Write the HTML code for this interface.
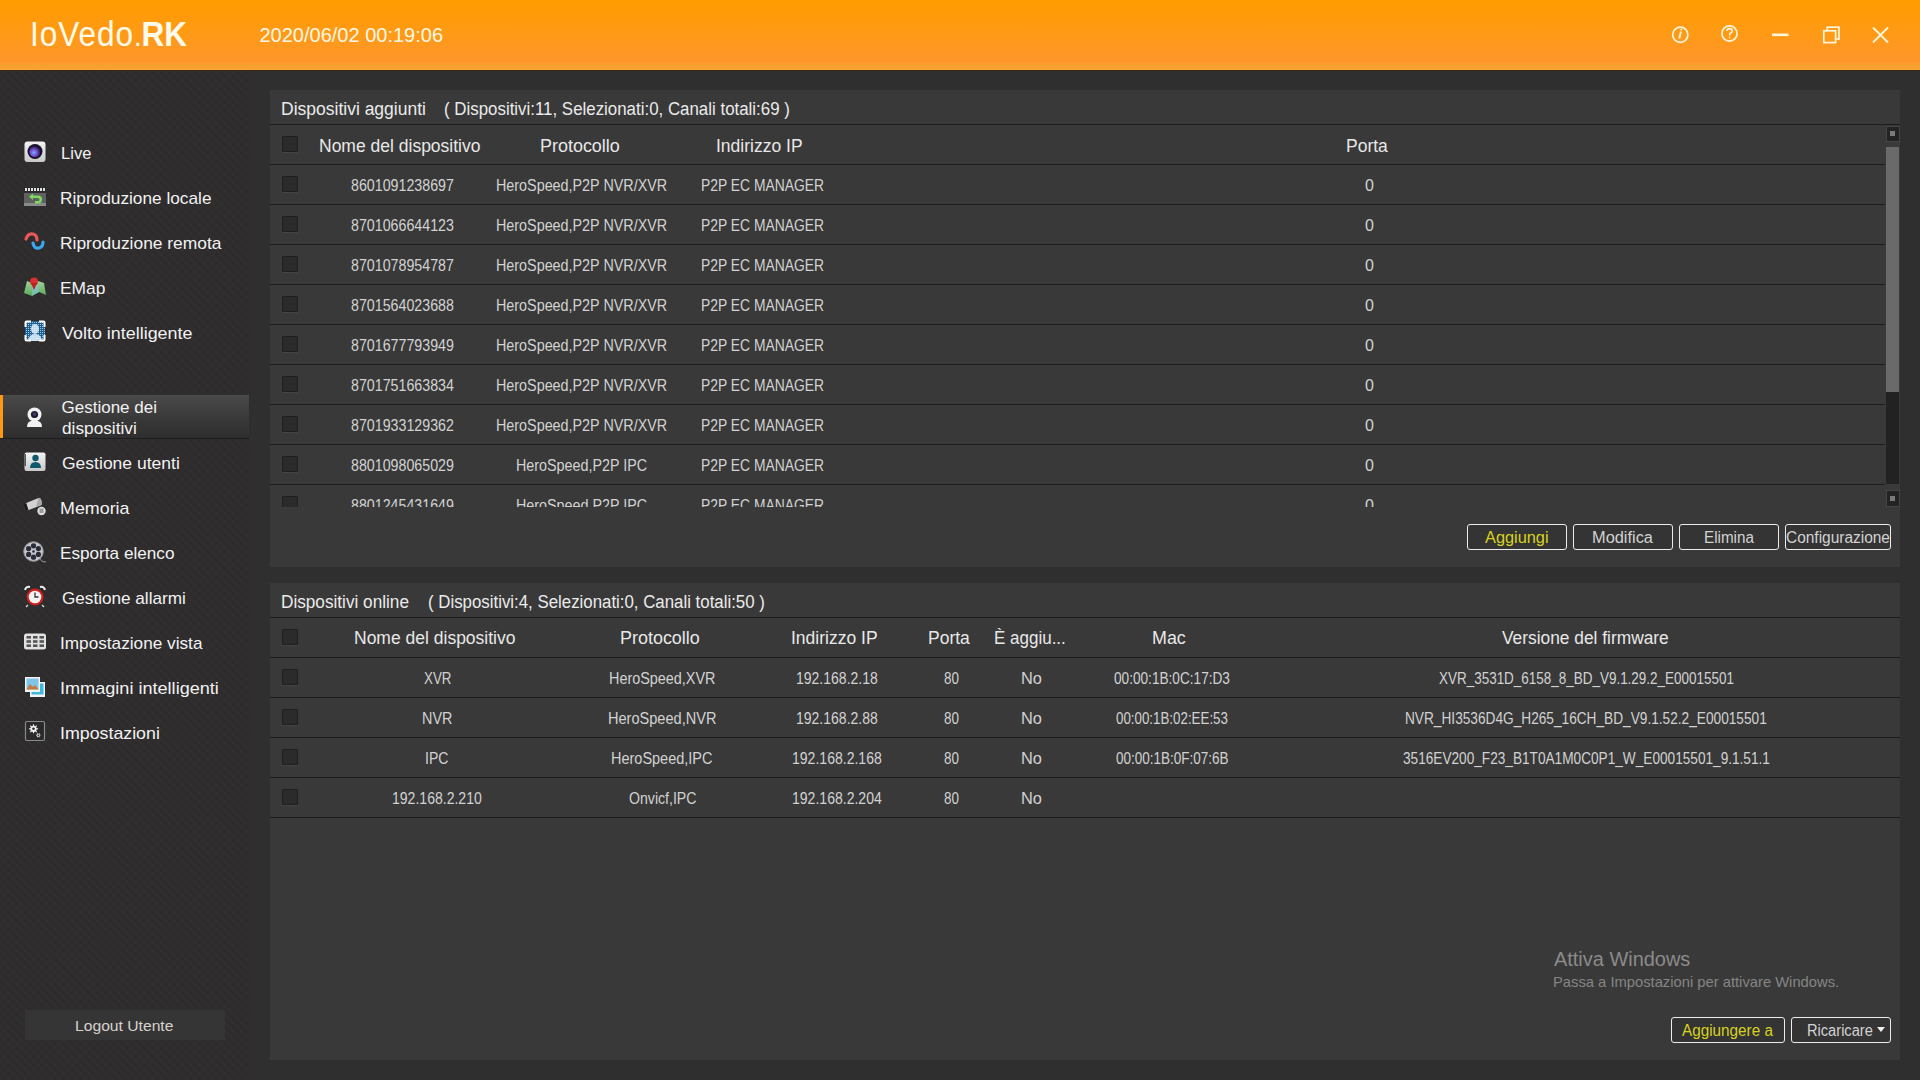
<!DOCTYPE html>
<html><head><meta charset="utf-8"><style>
*{margin:0;padding:0;box-sizing:border-box}
html,body{width:1920px;height:1080px;overflow:hidden;background:#2f2f2f;font-family:"Liberation Sans",sans-serif}
.tx{position:absolute;white-space:pre;line-height:1}
#hdr{position:absolute;left:0;top:0;width:1920px;height:70px;background:linear-gradient(#ff9c00,#ff9a14 45%,#ff962c 88%,#f7a02c 93%,#f9a535)}
#hdrline{position:absolute;left:0;top:70px;width:1920px;height:1px;background:#3a2814}
#side{position:absolute;left:0;top:71px;width:250px;height:1009px;background:repeating-linear-gradient(45deg,rgba(255,255,255,0.012) 0 3px,rgba(0,0,0,0) 3px 6px),repeating-linear-gradient(-45deg,rgba(0,0,0,0.02) 0 3px,rgba(0,0,0,0) 3px 6px),#2e2c2d}
#main{position:absolute;left:250px;top:71px;width:1670px;height:1009px;background:#2f2f2f}
.panel{position:absolute;left:270px;width:1630px;background:#393939}
.hl{position:absolute;height:1px;background:#1c1c1c}
.cb{position:absolute;left:282px;width:16px;height:16px;background:#2b2b2b;border:1px solid #1f1f1f;border-radius:1px;box-shadow:0 1px 0 #444}
.ico{position:absolute}
.btn{position:absolute;height:26px;border:1.5px solid #ececec;border-radius:3px;background:#343434}
</style></head><body>
<div id="hdr"></div><div id="hdrline"></div>
<div class="tx" style="left:30px;top:15.5px;font-size:35px;color:#fffbea;transform:scaleX(0.9);transform-origin:0 0"><span style="letter-spacing:1.1px">IoVedo</span><b style="font-weight:normal;font-size:30px">.</b><b>RK</b></div>
<div id="side"></div><div id="main"></div>
<div class="panel" style="top:90px;height:477px"></div>
<div class="panel" style="top:583px;height:477px"></div>
<div class="hl" style="left:270px;top:124px;width:1630px"></div>
<div class="cb" style="top:136px"></div>
<div class="hl" style="left:270px;top:164px;width:1615px"></div>
<div style="position:absolute;left:0;top:0;width:1920px;height:507px;overflow:hidden">
<div class="cb" style="top:176px"></div>
<div class="hl" style="left:270px;top:204px;width:1615px"></div>
<div class="cb" style="top:216px"></div>
<div class="hl" style="left:270px;top:244px;width:1615px"></div>
<div class="cb" style="top:256px"></div>
<div class="hl" style="left:270px;top:284px;width:1615px"></div>
<div class="cb" style="top:296px"></div>
<div class="hl" style="left:270px;top:324px;width:1615px"></div>
<div class="cb" style="top:336px"></div>
<div class="hl" style="left:270px;top:364px;width:1615px"></div>
<div class="cb" style="top:376px"></div>
<div class="hl" style="left:270px;top:404px;width:1615px"></div>
<div class="cb" style="top:416px"></div>
<div class="hl" style="left:270px;top:444px;width:1615px"></div>
<div class="cb" style="top:456px"></div>
<div class="hl" style="left:270px;top:484px;width:1615px"></div>
<div class="cb" style="top:496px"></div>
<div class="hl" style="left:270px;top:524px;width:1615px"></div>
<div class="tx" style="left:350.50px;top:178.44px;font-size:16px;color:#d2d2d2;transform:scaleX(0.8896);transform-origin:0 0;">8601091238697</div>
<div class="tx" style="left:496.10px;top:178.44px;font-size:16px;color:#d2d2d2;transform:scaleX(0.8964);transform-origin:0 0;">HeroSpeed,P2P NVR/XVR</div>
<div class="tx" style="left:700.63px;top:178.44px;font-size:16px;color:#d2d2d2;transform:scaleX(0.8671);transform-origin:0 0;">P2P EC MANAGER</div>
<div class="tx" style="left:1365.00px;top:178.44px;font-size:16px;color:#d2d2d2;">0</div>
<div class="tx" style="left:350.50px;top:218.44px;font-size:16px;color:#d2d2d2;transform:scaleX(0.8896);transform-origin:0 0;">8701066644123</div>
<div class="tx" style="left:496.10px;top:218.44px;font-size:16px;color:#d2d2d2;transform:scaleX(0.8964);transform-origin:0 0;">HeroSpeed,P2P NVR/XVR</div>
<div class="tx" style="left:700.63px;top:218.44px;font-size:16px;color:#d2d2d2;transform:scaleX(0.8671);transform-origin:0 0;">P2P EC MANAGER</div>
<div class="tx" style="left:1365.00px;top:218.44px;font-size:16px;color:#d2d2d2;">0</div>
<div class="tx" style="left:350.50px;top:258.44px;font-size:16px;color:#d2d2d2;transform:scaleX(0.8896);transform-origin:0 0;">8701078954787</div>
<div class="tx" style="left:496.10px;top:258.44px;font-size:16px;color:#d2d2d2;transform:scaleX(0.8964);transform-origin:0 0;">HeroSpeed,P2P NVR/XVR</div>
<div class="tx" style="left:700.63px;top:258.44px;font-size:16px;color:#d2d2d2;transform:scaleX(0.8671);transform-origin:0 0;">P2P EC MANAGER</div>
<div class="tx" style="left:1365.00px;top:258.44px;font-size:16px;color:#d2d2d2;">0</div>
<div class="tx" style="left:350.50px;top:298.44px;font-size:16px;color:#d2d2d2;transform:scaleX(0.8896);transform-origin:0 0;">8701564023688</div>
<div class="tx" style="left:496.10px;top:298.44px;font-size:16px;color:#d2d2d2;transform:scaleX(0.8964);transform-origin:0 0;">HeroSpeed,P2P NVR/XVR</div>
<div class="tx" style="left:700.63px;top:298.44px;font-size:16px;color:#d2d2d2;transform:scaleX(0.8671);transform-origin:0 0;">P2P EC MANAGER</div>
<div class="tx" style="left:1365.00px;top:298.44px;font-size:16px;color:#d2d2d2;">0</div>
<div class="tx" style="left:350.50px;top:338.44px;font-size:16px;color:#d2d2d2;transform:scaleX(0.8896);transform-origin:0 0;">8701677793949</div>
<div class="tx" style="left:496.10px;top:338.44px;font-size:16px;color:#d2d2d2;transform:scaleX(0.8964);transform-origin:0 0;">HeroSpeed,P2P NVR/XVR</div>
<div class="tx" style="left:700.63px;top:338.44px;font-size:16px;color:#d2d2d2;transform:scaleX(0.8671);transform-origin:0 0;">P2P EC MANAGER</div>
<div class="tx" style="left:1365.00px;top:338.44px;font-size:16px;color:#d2d2d2;">0</div>
<div class="tx" style="left:350.50px;top:378.44px;font-size:16px;color:#d2d2d2;transform:scaleX(0.8896);transform-origin:0 0;">8701751663834</div>
<div class="tx" style="left:496.10px;top:378.44px;font-size:16px;color:#d2d2d2;transform:scaleX(0.8964);transform-origin:0 0;">HeroSpeed,P2P NVR/XVR</div>
<div class="tx" style="left:700.63px;top:378.44px;font-size:16px;color:#d2d2d2;transform:scaleX(0.8671);transform-origin:0 0;">P2P EC MANAGER</div>
<div class="tx" style="left:1365.00px;top:378.44px;font-size:16px;color:#d2d2d2;">0</div>
<div class="tx" style="left:350.50px;top:418.44px;font-size:16px;color:#d2d2d2;transform:scaleX(0.8896);transform-origin:0 0;">8701933129362</div>
<div class="tx" style="left:496.10px;top:418.44px;font-size:16px;color:#d2d2d2;transform:scaleX(0.8964);transform-origin:0 0;">HeroSpeed,P2P NVR/XVR</div>
<div class="tx" style="left:700.63px;top:418.44px;font-size:16px;color:#d2d2d2;transform:scaleX(0.8671);transform-origin:0 0;">P2P EC MANAGER</div>
<div class="tx" style="left:1365.00px;top:418.44px;font-size:16px;color:#d2d2d2;">0</div>
<div class="tx" style="left:350.50px;top:458.44px;font-size:16px;color:#d2d2d2;transform:scaleX(0.8896);transform-origin:0 0;">8801098065029</div>
<div class="tx" style="left:516.10px;top:458.44px;font-size:16px;color:#d2d2d2;transform:scaleX(0.8953);transform-origin:0 0;">HeroSpeed,P2P IPC</div>
<div class="tx" style="left:700.63px;top:458.44px;font-size:16px;color:#d2d2d2;transform:scaleX(0.8671);transform-origin:0 0;">P2P EC MANAGER</div>
<div class="tx" style="left:1365.00px;top:458.44px;font-size:16px;color:#d2d2d2;">0</div>
<div class="tx" style="left:350.50px;top:498.44px;font-size:16px;color:#d2d2d2;transform:scaleX(0.8896);transform-origin:0 0;">8801245431649</div>
<div class="tx" style="left:516.10px;top:498.44px;font-size:16px;color:#d2d2d2;transform:scaleX(0.8953);transform-origin:0 0;">HeroSpeed,P2P IPC</div>
<div class="tx" style="left:700.63px;top:498.44px;font-size:16px;color:#d2d2d2;transform:scaleX(0.8671);transform-origin:0 0;">P2P EC MANAGER</div>
<div class="tx" style="left:1365.00px;top:498.44px;font-size:16px;color:#d2d2d2;">0</div>
</div>
<div style="position:absolute;left:1886px;top:126px;width:14px;height:16px;background:#232323;border:1px solid #454545"></div>
<div style="position:absolute;left:1890px;top:131px;width:5px;height:5px;background:#7a7a7a"></div>
<div style="position:absolute;left:1886px;top:147px;width:13px;height:245px;background:#6a6a6a"></div>
<div style="position:absolute;left:1886px;top:392px;width:13px;height:92px;background:#222"></div>
<div style="position:absolute;left:1886px;top:490px;width:14px;height:17px;background:#232323;border:1px solid #454545"></div>
<div style="position:absolute;left:1890px;top:496px;width:5px;height:5px;background:#7a7a7a"></div>
<div class="btn" style="left:1467px;top:524px;width:100px"></div>
<div class="btn" style="left:1573px;top:524px;width:100px"></div>
<div class="btn" style="left:1679px;top:524px;width:100px"></div>
<div class="btn" style="left:1785px;top:524px;width:106px"></div>
<div class="hl" style="left:270px;top:617px;width:1630px"></div>
<div class="cb" style="top:629px"></div>
<div class="hl" style="left:270px;top:657px;width:1630px"></div>
<div class="cb" style="top:669px"></div>
<div class="hl" style="left:270px;top:697px;width:1630px"></div>
<div class="cb" style="top:709px"></div>
<div class="hl" style="left:270px;top:737px;width:1630px"></div>
<div class="cb" style="top:749px"></div>
<div class="hl" style="left:270px;top:777px;width:1630px"></div>
<div class="cb" style="top:789px"></div>
<div class="hl" style="left:270px;top:817px;width:1630px"></div>
<div class="btn" style="left:1671px;top:1017px;width:114px"></div>
<div class="btn" style="left:1791px;top:1017px;width:100px"></div>
<div style="position:absolute;left:1877px;top:1027px;width:0;height:0;border-left:4px solid transparent;border-right:4px solid transparent;border-top:5px solid #f0f0f0"></div>
<div style="position:absolute;left:0;top:395px;width:249px;height:43px;background:linear-gradient(#4a4a4a,#3a3a3a 50%,#2e2e2e);box-shadow:0 1px 0 #1e1e1e"></div>
<div style="position:absolute;left:0;top:395px;width:3px;height:43px;background:#ff9a10"></div>
<div style="position:absolute;left:25px;top:1010px;width:200px;height:30px;background:#363535"></div>
<svg style="position:absolute;left:0;top:0" width="260" height="760" viewBox="0 0 260 760">
 <defs>
  <linearGradient id="gw" x1="0" y1="0" x2="0" y2="1"><stop offset="0" stop-color="#f4f4f4"/><stop offset="1" stop-color="#c8c8c8"/></linearGradient>
  <radialGradient id="glens" cx="0.4" cy="0.6" r="0.6"><stop offset="0" stop-color="#6ab0ff"/><stop offset="0.45" stop-color="#7b4fd8"/><stop offset="1" stop-color="#161030"/></radialGradient>
  <linearGradient id="gmap" x1="0" y1="0" x2="0" y2="1"><stop offset="0" stop-color="#9fd49a"/><stop offset="1" stop-color="#5aa85a"/></linearGradient>
  <pattern id="pgrid" width="2" height="2" patternUnits="userSpaceOnUse"><rect width="2" height="2" fill="#1f5f8f"/><rect width="1" height="1" fill="#9cc8e8"/></pattern>
 </defs>
 <!-- Live -->
 <rect x="24.5" y="141.5" width="21" height="20.5" rx="3" fill="url(#gw)"/>
 <circle cx="35" cy="151.5" r="7.5" fill="#15122a"/>
 <circle cx="35" cy="151.5" r="5.8" fill="url(#glens)"/>
 <!-- Riproduzione locale -->
 <rect x="24" y="187" width="22" height="5" fill="#2a2a2a"/>
 <g fill="#e0e0e0"><rect x="25" y="188" width="2" height="3"/><rect x="28" y="188" width="2" height="3"/><rect x="31" y="188" width="2" height="3"/><rect x="34" y="188" width="2" height="3"/><rect x="37" y="188" width="2" height="3"/><rect x="40" y="188" width="2" height="3"/><rect x="43" y="188" width="2" height="3"/></g>
 <rect x="24" y="193" width="22" height="13" fill="#5f625f"/>
 <rect x="24" y="203" width="22" height="3" fill="#8a8a8a"/>
 <path d="M29 196.5 L33 193.5 L33 195.5 L38 195.5 Q42 195.5 42 199.5 Q42 203.5 38 203.5 L35 203.5 L35 201 L38 201 Q39.5 201 39.5 199.5 Q39.5 198 38 198 L33 198 L33 200 Z" fill="#7ed860"/>
 <!-- Riproduzione remota -->
 <path d="M26 239 Q28 233 33 234 Q37 235 37 240" fill="none" stroke="#e85a5a" stroke-width="3.2" stroke-linecap="round"/>
 <path d="M33 243 Q34 249 39 248 Q43 247 43 242" fill="none" stroke="#3aa8f0" stroke-width="3.2" stroke-linecap="round"/>
 <!-- EMap -->
 <path d="M24 293 L27 281 L32 283 L38 281 L44 283 L46 295 L39 292 L32 296 Z" fill="url(#gmap)"/>
 <path d="M32 283 L38 281 L39 292 L32 296 Z" fill="#88c8e8" opacity="0.55"/>
 <circle cx="34" cy="281.5" r="4" fill="#d83030"/>
 <path d="M31 283 L34 290 L37 283 Z" fill="#c02020"/>
 <!-- Volto -->
 <rect x="25" y="321" width="20" height="20" rx="2" fill="url(#pgrid)"/>
 <ellipse cx="35" cy="329" rx="4" ry="5" fill="#d8ecf8" opacity="0.9"/>
 <path d="M28 341 Q29 334 35 334 Q41 334 42 341 Z" fill="#d8ecf8" opacity="0.9"/>
 <path d="M25.5 327 L25.5 322.5 Q25.5 321.5 26.5 321.5 L31 321.5 M39 321.5 L43.5 321.5 Q44.5 321.5 44.5 322.5 L44.5 327 M44.5 335 L44.5 339.5 Q44.5 340.5 43.5 340.5 L39 340.5 M31 340.5 L26.5 340.5 Q25.5 340.5 25.5 339.5 L25.5 335" fill="none" stroke="#ffffff" stroke-width="2"/>
 <!-- Gestione dispositivi (webcam) -->
 <circle cx="34.5" cy="414.5" r="7" fill="#f2f2f2"/>
 <circle cx="34.5" cy="414.5" r="3.6" fill="#1c1830"/>
 <circle cx="34.5" cy="414" r="2" fill="#3c3a60"/>
 <path d="M27 427 Q27 422 31 421 L38 421 Q42 422 42 427 Z" fill="#f2f2f2"/>
 <!-- Gestione utenti -->
 <rect x="24.5" y="452.5" width="21" height="18.5" rx="2" fill="url(#gw)"/>
 <rect x="24.5" y="454" width="1.5" height="12" fill="#555"/>
 <circle cx="35.5" cy="458" r="3.2" fill="#0e5a6a"/>
 <path d="M30 468 Q30 462 35.5 462 Q41 462 41 468 Z" fill="#0e5a6a"/>
 <!-- Memoria (cctv) -->
 <path d="M25 503.5 L38.5 498 Q40.5 497.5 41 499.5 L42 503 Q42.3 504.8 40.5 505.5 L27.5 510.5 Z" fill="#d2d2d2"/>
 <path d="M38.5 498 Q40.5 497.5 41 499.5 L42 503 Q42.3 504.8 40.5 505.5 L36 507 Z" fill="#a8a8a8"/>
 <path d="M24 503.8 L26.2 503 L28.5 510 L26.3 510.8 Z" fill="#1a1a1a"/>
 <circle cx="41.5" cy="511" r="4.2" fill="#e0e0e0"/>
 <path d="M39.5 508.5 L43.5 508.5 L43.5 513 L39.5 513 Z" fill="#9a9a9a"/>
 <!-- Esporta (reel) -->
 <circle cx="33.5" cy="551.5" r="9.8" fill="#c4c6cc"/>
 <circle cx="33.5" cy="551.5" r="9.8" fill="none" stroke="#8a8c92" stroke-width="1"/>
 <g fill="#2a2c36"><circle cx="33.5" cy="545.8" r="2.6"/><circle cx="38.4" cy="548.6" r="2.6"/><circle cx="38.4" cy="554.4" r="2.6"/><circle cx="33.5" cy="557.2" r="2.6"/><circle cx="28.6" cy="554.4" r="2.6"/><circle cx="28.6" cy="548.6" r="2.6"/></g>
 <circle cx="33.5" cy="551.5" r="1.3" fill="#2a2c36"/>
 <path d="M40 559 Q43 563 46 561.5" stroke="#8a8a8a" stroke-width="1.1" fill="none"/>
 <!-- Allarmi -->
 <path d="M25 590 Q26 586 30 587 M45 590 Q44 586 40 587" stroke="#eee" stroke-width="2" fill="none"/>
 <circle cx="35" cy="597" r="8.5" fill="#d02020"/>
 <circle cx="35" cy="597" r="6.3" fill="#f2f2f2"/>
 <path d="M35 592.5 L35 597 L38.5 597" stroke="#333" stroke-width="1.3" fill="none"/>
 <path d="M28 605 L26 607 M42 605 L44 607" stroke="#ddd" stroke-width="1.3"/>
 <!-- Vista -->
 <rect x="24" y="633.5" width="22" height="16" rx="2.5" fill="#e2e2e2"/>
 <g fill="#555"><rect x="26.5" y="636" width="4.5" height="2.6"/><rect x="33" y="636" width="4.5" height="2.6"/><rect x="39.5" y="636" width="4.5" height="2.6"/>
 <rect x="26.5" y="640.2" width="4.5" height="2.6"/><rect x="33" y="640.2" width="4.5" height="2.6"/><rect x="39.5" y="640.2" width="4.5" height="2.6"/>
 <rect x="26.5" y="644.4" width="4.5" height="2.6"/><rect x="33" y="644.4" width="4.5" height="2.6"/><rect x="39.5" y="644.4" width="4.5" height="2.6"/></g>
 <!-- Immagini -->
 <rect x="30" y="682" width="15" height="15" fill="#f4f4f4"/>
 <rect x="31.5" y="683.5" width="12" height="11" fill="#40b8d8"/>
 <rect x="25" y="677" width="15" height="15" fill="#f4f4f4"/>
 <rect x="26.5" y="678.5" width="12" height="11" fill="#7cc4e8"/>
 <path d="M26.5 689.5 L30 684 L33 687 L35 685 L38.5 689.5 Z" fill="#c87a3a"/>
 <!-- Impostazioni -->
 <rect x="25.5" y="721.5" width="19" height="19" rx="1.5" fill="#2a2a2a" stroke="#8a8a8a" stroke-width="1.2"/>
 <path d="M36.64 728.18 L38.07 728.26 L38.07 729.34 L36.64 729.42 L36.16 730.58 L37.11 731.65 L36.35 732.41 L35.28 731.46 L34.12 731.94 L34.04 733.37 L32.96 733.37 L32.88 731.94 L31.72 731.46 L30.65 732.41 L29.89 731.65 L30.84 730.58 L30.36 729.42 L28.93 729.34 L28.93 728.26 L30.36 728.18 L30.84 727.02 L29.89 725.95 L30.65 725.19 L31.72 726.14 L32.88 725.66 L32.96 724.23 L34.04 724.23 L34.12 725.66 L35.28 726.14 L36.35 725.19 L37.11 725.95 L36.16 727.02 Z" fill="#f0f0f0"/>
 <circle cx="33.5" cy="728.8" r="1.3" fill="#2a2a2a"/>
 <path d="M39.85 734.79 L40.67 734.82 L40.67 735.58 L39.85 735.61 L39.43 736.33 L39.81 737.07 L39.16 737.44 L38.71 736.75 L37.89 736.75 L37.44 737.44 L36.79 737.07 L37.17 736.33 L36.75 735.61 L35.93 735.58 L35.93 734.82 L36.75 734.79 L37.17 734.07 L36.79 733.33 L37.44 732.96 L37.89 733.65 L38.71 733.65 L39.16 732.96 L39.81 733.33 L39.43 734.07 Z" fill="#d8d8d8"/>
 <circle cx="38.3" cy="735.2" r="0.8" fill="#2a2a2a"/>
</svg>
<svg style="position:absolute;left:1660px;top:15px" width="240" height="40" viewBox="1660 15 240 40">
 <g fill="none" stroke="#fff6dc" stroke-width="1.7">
  <circle cx="1680.3" cy="34.8" r="7.6"/>
  <circle cx="1729.5" cy="33.5" r="7.6"/>
  <rect x="1827.2" y="27.2" width="11.8" height="11.8"/>
 </g>
 <path d="M1680.9 31.5 L1679.3 38.5" stroke="#fff6dc" stroke-width="1.9"/>
 <circle cx="1681.2" cy="29.5" r="0.9" fill="#fff6dc"/>
 <path d="M1727 31 Q1727 28.6 1729.6 28.6 Q1732.2 28.6 1732.2 31 Q1732.2 32.6 1729.8 33.6 L1729.6 35.5" stroke="#fff6dc" stroke-width="1.6" fill="none"/>
 <circle cx="1729.6" cy="37.6" r="0.8" fill="#fff6dc"/>
 <rect x="1772" y="33.5" width="16.5" height="2.6" fill="#fff6dc"/>
 <rect x="1823.8" y="30.8" width="11.8" height="11.8" fill="#fd9a18" stroke="#fff6dc" stroke-width="1.7"/>
 <path d="M1873 27.5 L1888 42.5 M1888 27.5 L1873 42.5" stroke="#fff6dc" stroke-width="1.8"/>
</svg>

<div class="tx" style="left:259.50px;top:25.30px;font-size:20px;color:#fff8e6;">2020/06/02 00:19:06</div>
<div class="tx" style="left:281.03px;top:99.62px;font-size:18px;color:#ebebeb;transform:scaleX(0.9723);transform-origin:0 0;">Dispositivi aggiunti</div>
<div class="tx" style="left:444.06px;top:99.62px;font-size:18px;color:#ebebeb;transform:scaleX(0.9377);transform-origin:0 0;">( Dispositivi:11, Selezionati:0, Canali totali:69 )</div>
<div class="tx" style="left:319.00px;top:137.70px;font-size:17.5px;color:#e8e8e8;">Nome del dispositivo</div>
<div class="tx" style="left:539.97px;top:137.70px;font-size:17.5px;color:#e8e8e8;transform:scaleX(1.0252);transform-origin:0 0;">Protocollo</div>
<div class="tx" style="left:716.00px;top:137.70px;font-size:17.5px;color:#e8e8e8;">Indirizzo IP</div>
<div class="tx" style="left:1346.00px;top:137.70px;font-size:17.5px;color:#e8e8e8;">Porta</div>
<div class="tx" style="left:281.05px;top:592.62px;font-size:18px;color:#ebebeb;transform:scaleX(0.9545);transform-origin:0 0;">Dispositivi online</div>
<div class="tx" style="left:428.06px;top:592.62px;font-size:18px;color:#ebebeb;transform:scaleX(0.9353);transform-origin:0 0;">( Dispositivi:4, Selezionati:0, Canali totali:50 )</div>
<div class="tx" style="left:354.00px;top:630.20px;font-size:17.5px;color:#e8e8e8;">Nome del dispositivo</div>
<div class="tx" style="left:619.97px;top:630.20px;font-size:17.5px;color:#e8e8e8;transform:scaleX(1.0252);transform-origin:0 0;">Protocollo</div>
<div class="tx" style="left:791.00px;top:630.20px;font-size:17.5px;color:#e8e8e8;">Indirizzo IP</div>
<div class="tx" style="left:928.00px;top:630.20px;font-size:17.5px;color:#e8e8e8;">Porta</div>
<div class="tx" style="left:994.03px;top:630.20px;font-size:17.5px;color:#e8e8e8;transform:scaleX(0.9712);transform-origin:0 0;">È aggiu...</div>
<div class="tx" style="left:1151.98px;top:630.20px;font-size:17.5px;color:#e8e8e8;transform:scaleX(1.0213);transform-origin:0 0;">Mac</div>
<div class="tx" style="left:1502.00px;top:630.20px;font-size:17.5px;color:#e8e8e8;transform:scaleX(0.9908);transform-origin:0 0;">Versione del firmware</div>
<div class="tx" style="left:424.00px;top:671.44px;font-size:16px;color:#d2d2d2;transform:scaleX(0.8348);transform-origin:0 0;">XVR</div>
<div class="tx" style="left:609.10px;top:671.44px;font-size:16px;color:#d2d2d2;transform:scaleX(0.8995);transform-origin:0 0;">HeroSpeed,XVR</div>
<div class="tx" style="left:796.12px;top:671.44px;font-size:16px;color:#d2d2d2;transform:scaleX(0.8755);transform-origin:0 0;">192.168.2.18</div>
<div class="tx" style="left:944.00px;top:671.44px;font-size:16px;color:#d2d2d2;transform:scaleX(0.8381);transform-origin:0 0;">80</div>
<div class="tx" style="left:1020.98px;top:671.44px;font-size:16px;color:#d2d2d2;transform:scaleX(1.0228);transform-origin:0 0;">No</div>
<div class="tx" style="left:1114.00px;top:671.44px;font-size:16px;color:#d2d2d2;transform:scaleX(0.8517);transform-origin:0 0;">00:00:1B:0C:17:D3</div>
<div class="tx" style="left:1439.00px;top:671.44px;font-size:16px;color:#d2d2d2;transform:scaleX(0.8414);transform-origin:0 0;">XVR_3531D_6158_8_BD_V9.1.29.2_E00015501</div>
<div class="tx" style="left:422.10px;top:711.44px;font-size:16px;color:#d2d2d2;transform:scaleX(0.8999);transform-origin:0 0;">NVR</div>
<div class="tx" style="left:608.09px;top:711.44px;font-size:16px;color:#d2d2d2;transform:scaleX(0.9097);transform-origin:0 0;">HeroSpeed,NVR</div>
<div class="tx" style="left:796.12px;top:711.44px;font-size:16px;color:#d2d2d2;transform:scaleX(0.8755);transform-origin:0 0;">192.168.2.88</div>
<div class="tx" style="left:944.00px;top:711.44px;font-size:16px;color:#d2d2d2;transform:scaleX(0.8381);transform-origin:0 0;">80</div>
<div class="tx" style="left:1020.98px;top:711.44px;font-size:16px;color:#d2d2d2;transform:scaleX(1.0228);transform-origin:0 0;">No</div>
<div class="tx" style="left:1116.00px;top:711.44px;font-size:16px;color:#d2d2d2;transform:scaleX(0.8331);transform-origin:0 0;">00:00:1B:02:EE:53</div>
<div class="tx" style="left:1405.15px;top:711.44px;font-size:16px;color:#d2d2d2;transform:scaleX(0.8544);transform-origin:0 0;">NVR_HI3536D4G_H265_16CH_BD_V9.1.52.2_E00015501</div>
<div class="tx" style="left:425.12px;top:751.44px;font-size:16px;color:#d2d2d2;transform:scaleX(0.8759);transform-origin:0 0;">IPC</div>
<div class="tx" style="left:611.10px;top:751.44px;font-size:16px;color:#d2d2d2;transform:scaleX(0.9049);transform-origin:0 0;">HeroSpeed,IPC</div>
<div class="tx" style="left:792.12px;top:751.44px;font-size:16px;color:#d2d2d2;transform:scaleX(0.8775);transform-origin:0 0;">192.168.2.168</div>
<div class="tx" style="left:944.00px;top:751.44px;font-size:16px;color:#d2d2d2;transform:scaleX(0.8381);transform-origin:0 0;">80</div>
<div class="tx" style="left:1020.98px;top:751.44px;font-size:16px;color:#d2d2d2;transform:scaleX(1.0228);transform-origin:0 0;">No</div>
<div class="tx" style="left:1116.00px;top:751.44px;font-size:16px;color:#d2d2d2;transform:scaleX(0.8436);transform-origin:0 0;">00:00:1B:0F:07:6B</div>
<div class="tx" style="left:1403.00px;top:751.44px;font-size:16px;color:#d2d2d2;transform:scaleX(0.8522);transform-origin:0 0;">3516EV200_F23_B1T0A1M0C0P1_W_E00015501_9.1.51.1</div>
<div class="tx" style="left:392.12px;top:791.44px;font-size:16px;color:#d2d2d2;transform:scaleX(0.8775);transform-origin:0 0;">192.168.2.210</div>
<div class="tx" style="left:629.00px;top:791.44px;font-size:16px;color:#d2d2d2;transform:scaleX(0.8827);transform-origin:0 0;">Onvicf,IPC</div>
<div class="tx" style="left:792.12px;top:791.44px;font-size:16px;color:#d2d2d2;transform:scaleX(0.8775);transform-origin:0 0;">192.168.2.204</div>
<div class="tx" style="left:944.00px;top:791.44px;font-size:16px;color:#d2d2d2;transform:scaleX(0.8381);transform-origin:0 0;">80</div>
<div class="tx" style="left:1020.98px;top:791.44px;font-size:16px;color:#d2d2d2;transform:scaleX(1.0228);transform-origin:0 0;">No</div>
<div class="tx" style="left:60.52px;top:144.78px;font-size:17px;color:#f2f2f2;transform:scaleX(0.9754);transform-origin:0 0;">Live</div>
<div class="tx" style="left:60.49px;top:189.78px;font-size:17px;color:#f2f2f2;transform:scaleX(1.0145);transform-origin:0 0;">Riproduzione locale</div>
<div class="tx" style="left:60.48px;top:234.78px;font-size:17px;color:#f2f2f2;transform:scaleX(1.0232);transform-origin:0 0;">Riproduzione remota</div>
<div class="tx" style="left:60.48px;top:279.78px;font-size:17px;color:#f2f2f2;transform:scaleX(1.0243);transform-origin:0 0;">EMap</div>
<div class="tx" style="left:61.50px;top:324.78px;font-size:17px;color:#f2f2f2;transform:scaleX(1.0538);transform-origin:0 0;">Volto intelligente</div>
<div class="tx" style="left:61.50px;top:398.78px;font-size:17px;color:#f2f2f2;">Gestione dei</div>
<div class="tx" style="left:61.50px;top:419.78px;font-size:17px;color:#f2f2f2;transform:scaleX(1.0148);transform-origin:0 0;">dispositivi</div>
<div class="tx" style="left:61.50px;top:454.78px;font-size:17px;color:#f2f2f2;transform:scaleX(1.0302);transform-origin:0 0;">Gestione utenti</div>
<div class="tx" style="left:60.45px;top:499.78px;font-size:17px;color:#f2f2f2;transform:scaleX(1.0507);transform-origin:0 0;">Memoria</div>
<div class="tx" style="left:60.49px;top:544.78px;font-size:17px;color:#f2f2f2;transform:scaleX(1.0094);transform-origin:0 0;">Esporta elenco</div>
<div class="tx" style="left:61.50px;top:589.78px;font-size:17px;color:#f2f2f2;transform:scaleX(1.0078);transform-origin:0 0;">Gestione allarmi</div>
<div class="tx" style="left:60.49px;top:634.78px;font-size:17px;color:#f2f2f2;transform:scaleX(1.0119);transform-origin:0 0;">Impostazione vista</div>
<div class="tx" style="left:60.44px;top:679.78px;font-size:17px;color:#f2f2f2;transform:scaleX(1.0643);transform-origin:0 0;">Immagini intelligenti</div>
<div class="tx" style="left:60.45px;top:724.78px;font-size:17px;color:#f2f2f2;transform:scaleX(1.0464);transform-origin:0 0;">Impostazioni</div>
<div class="tx" style="left:1485.00px;top:529.94px;font-size:16px;color:#d7d21e;transform:scaleX(1.0208);transform-origin:0 0;">Aggiungi</div>
<div class="tx" style="left:1591.98px;top:529.94px;font-size:16px;color:#d2d2d2;transform:scaleX(1.0225);transform-origin:0 0;">Modifica</div>
<div class="tx" style="left:1704.05px;top:529.94px;font-size:16px;color:#d2d2d2;transform:scaleX(0.9503);transform-origin:0 0;">Elimina</div>
<div class="tx" style="left:1786.00px;top:529.94px;font-size:16px;color:#d2d2d2;transform:scaleX(0.9654);transform-origin:0 0;">Configurazione</div>
<div class="tx" style="left:1682.00px;top:1022.94px;font-size:16px;color:#d7d21e;transform:scaleX(0.9550);transform-origin:0 0;">Aggiungere a</div>
<div class="tx" style="left:1807.09px;top:1022.94px;font-size:16px;color:#d2d2d2;transform:scaleX(0.9140);transform-origin:0 0;">Ricaricare</div>
<div class="tx" style="left:74.96px;top:1018.10px;font-size:15px;color:#d6d2cc;transform:scaleX(1.0442);transform-origin:0 0;">Logout Utente</div>
<div class="tx" style="left:1554.00px;top:949.22px;font-size:20.5px;color:#8b8b8b;transform:scaleX(0.9723);transform-origin:0 0;">Attiva Windows</div>
<div class="tx" style="left:1553.02px;top:973.60px;font-size:15px;color:#858585;transform:scaleX(0.9834);transform-origin:0 0;">Passa a Impostazioni per attivare Windows.</div>
</body></html>
